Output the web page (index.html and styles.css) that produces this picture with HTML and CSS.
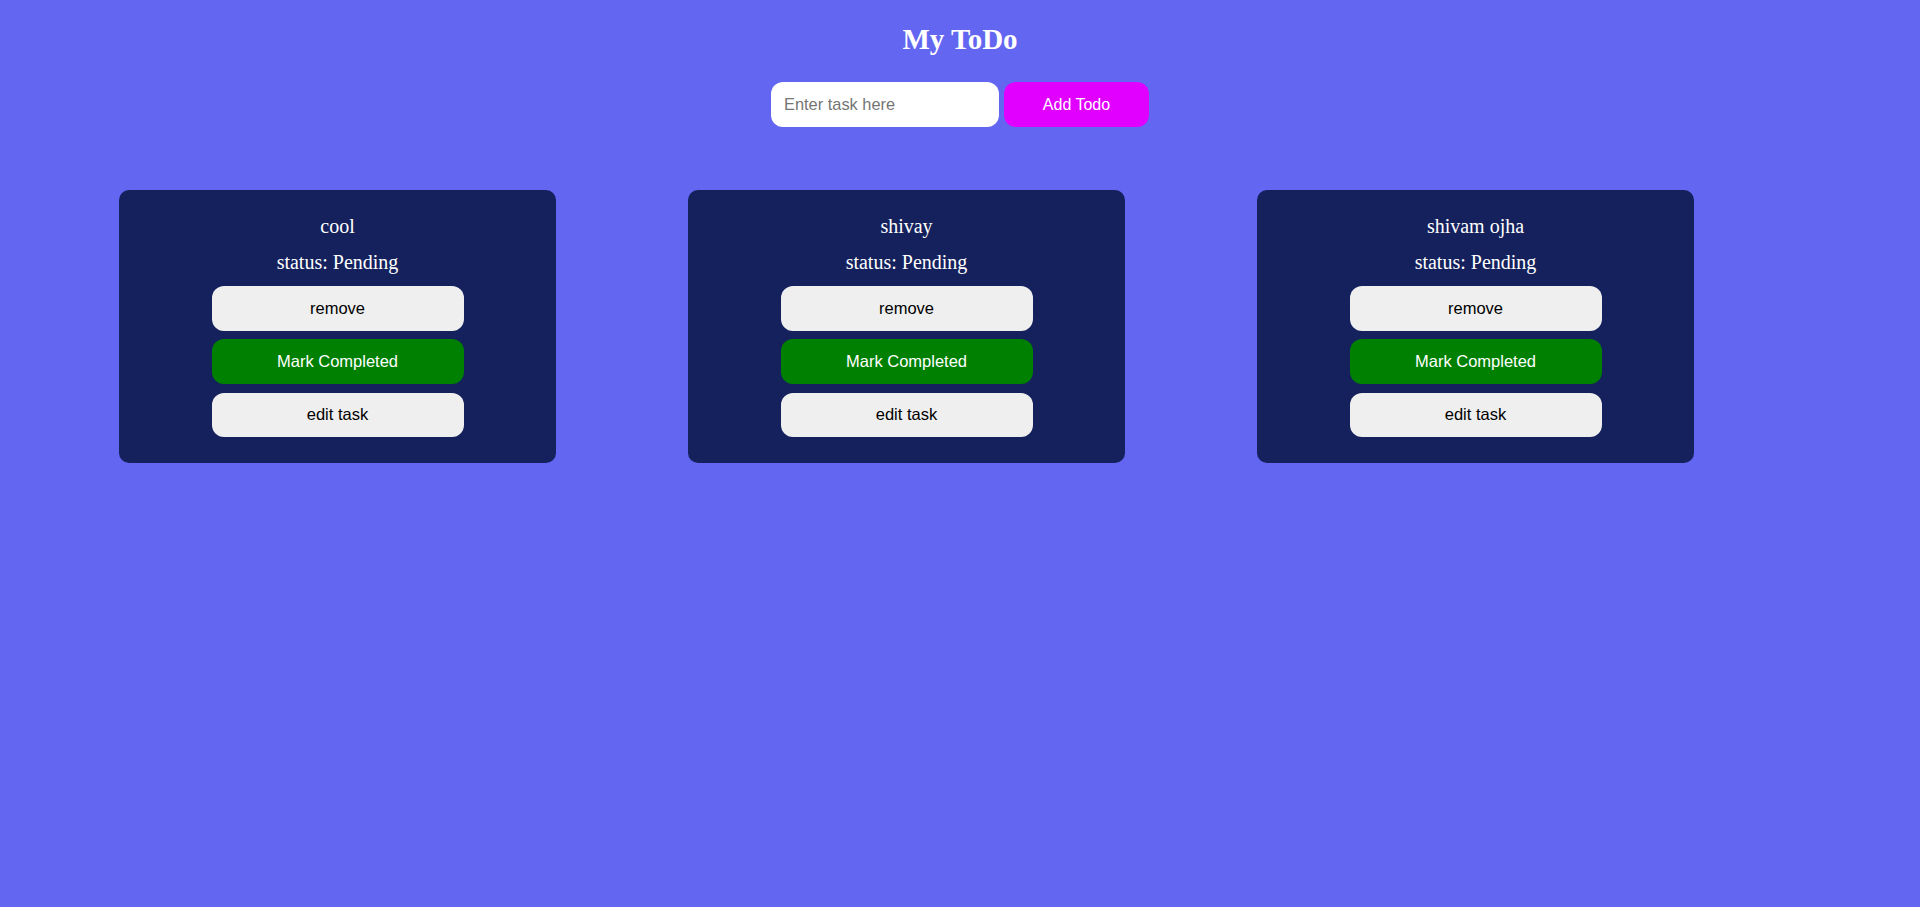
FILE: index.html
```html
<!DOCTYPE html>
<html lang="en">
<head>
<meta charset="utf-8">
<title>My ToDo</title>
<link rel="stylesheet" href="styles.css">
</head>
<body>
  <header class="header">
    <h1 class="title">My ToDo</h1>
    <form class="add-form">
      <input class="task-input" type="text" placeholder="Enter task here">
      <button class="add-btn" type="button">Add Todo</button>
    </form>
  </header>
  <main class="todo-list">
    <div class="card">
      <p class="card-title">cool</p>
      <p class="card-status">status: Pending</p>
      <button class="btn btn-light" type="button">remove</button>
      <button class="btn btn-green" type="button">Mark Completed</button>
      <button class="btn btn-light" type="button">edit task</button>
    </div>
    <div class="card">
      <p class="card-title">shivay</p>
      <p class="card-status">status: Pending</p>
      <button class="btn btn-light" type="button">remove</button>
      <button class="btn btn-green" type="button">Mark Completed</button>
      <button class="btn btn-light" type="button">edit task</button>
    </div>
    <div class="card">
      <p class="card-title">shivam ojha</p>
      <p class="card-status">status: Pending</p>
      <button class="btn btn-light" type="button">remove</button>
      <button class="btn btn-green" type="button">Mark Completed</button>
      <button class="btn btn-light" type="button">edit task</button>
    </div>
  </main>
</body>
</html>
```
FILE: styles.css
```css
html, body {
  margin: 0;
  padding: 0;
}

body {
  background: #6366f1;
  min-height: 907px;
  font-family: "Liberation Serif", "Times New Roman", serif;
  color: #ffffff;
}

.header {
  display: flex;
  flex-direction: column;
  align-items: center;
  padding-top: 22px;
}

.title {
  margin: 0;
  font-size: 29px;
  line-height: 34px;
  font-weight: bold;
  color: #ffffff;
}

.add-form {
  display: flex;
  gap: 5px;
  margin-top: 26px;
}

.task-input {
  box-sizing: border-box;
  width: 228px;
  height: 45px;
  border: none;
  border-radius: 12px;
  background: #ffffff;
  padding: 0 13px;
  font-family: "Liberation Sans", Arial, sans-serif;
  font-size: 16.4px;
  color: #000;
  outline: none;
}

.task-input::placeholder {
  color: #757575;
}

.add-btn {
  width: 145px;
  height: 45px;
  border: none;
  border-radius: 12px;
  background: #e100ff;
  color: #ffffff;
  font-family: "Liberation Sans", Arial, sans-serif;
  font-size: 16px;
  padding: 0;
}

.todo-list {
  display: flex;
  align-items: flex-start;
  gap: 132px;
  padding-left: 119px;
  margin-top: 63px;
}

.card {
  box-sizing: border-box;
  width: 437px;
  height: 273px;
  background: #14215d;
  border-radius: 10px;
  display: flex;
  flex-direction: column;
  align-items: center;
  padding-top: 25px;
}

.card-title,
.card-status {
  margin: 0;
  font-size: 20px;
  line-height: 23px;
  color: #ffffff;
}

.card-status {
  margin-top: 13px;
  margin-bottom: 12px;
}

.btn {
  width: 252px;
  height: 44.67px;
  border: none;
  border-radius: 12px;
  padding: 0;
  font-family: "Liberation Sans", Arial, sans-serif;
  font-size: 16.5px;
  flex-shrink: 0;
}

.btn + .btn {
  margin-top: 8.67px;
}

.btn-light {
  background: #efefef;
  color: #000000;
}

.btn-green {
  background: #008000;
  color: #ffffff;
}
```
